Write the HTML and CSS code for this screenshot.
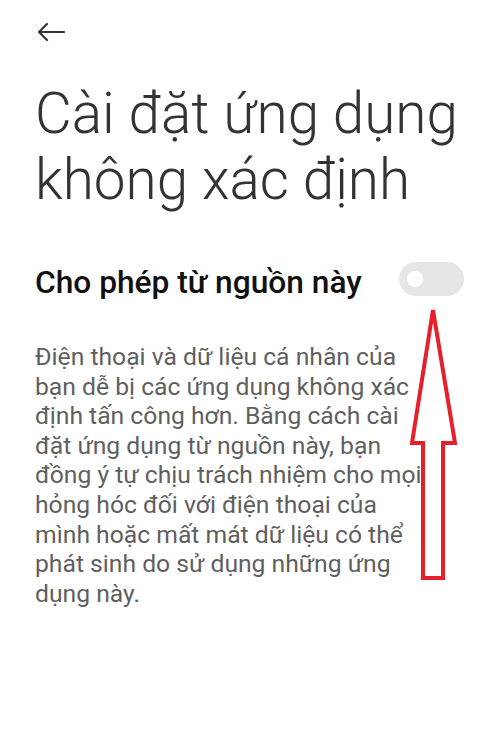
FILE: index.html
```html
<!DOCTYPE html>
<html lang="vi">
<head>
<meta charset="utf-8">
<link rel="stylesheet" href="styles.css">
</head>
<body>
<div class="page">
  <div class="topbar">
    <svg class="back" width="28" height="20" viewBox="0 0 28 20"><path d="M2 10 H27 M10 2 L2 10 L10 18" fill="none" stroke="#333" stroke-width="2.2" stroke-linecap="round" stroke-linejoin="round"/></svg>
  </div>
  <h1 class="title">Cài đặt ứng dụng không xác định</h1>
  <div class="row">
    <span class="row-label">Cho phép từ nguồn này</span>
    <span class="switch"><span class="knob"></span></span>
  </div>
  <p class="desc">Điện thoại và dữ liệu cá nhân của bạn dễ bị các ứng dụng không xác định tấn công hơn. Bằng cách cài đặt ứng dụng từ nguồn này, bạn đồng ý tự chịu trách nhiệm cho mọi hỏng hóc đối với điện thoại của mình hoặc mất mát dữ liệu có thể phát sinh do sử dụng những ứng dụng này.</p>
</div>
<svg class="annot" width="500" height="733" viewBox="0 0 500 733"><path d="M433 310 L455 443 L443 443 L443 578 L423 578 L423 443 L412 443 Z" fill="#fff" stroke="#e5202b" stroke-width="4" stroke-linejoin="miter"/></svg>
</body>
</html>
```
FILE: styles.css
```css
html, body { margin: 0; padding: 0; background: #fff; }
body { font-family: Roboto, "Noto Sans", sans-serif; width: 500px; height: 733px; overflow: hidden; position: relative; }
.page { padding: 0 35px 0 35px; }
.topbar { height: 66px; display: flex; align-items: center; }
.back { display: block; margin-left: 2px; margin-top: -2px; }
.title { margin: 15px 0 0 0; font-weight: 300; font-size: 56.6px; line-height: 66px; color: #333; }
.row { display: flex; align-items: center; justify-content: space-between; margin-top: 46px; height: 40px; }
.row-label { font-size: 31.7px; font-weight: 500; color: #111; margin-top: 6px; }
.switch { width: 65px; height: 34px; border-radius: 17px; background: #e6e6e6; position: relative; margin-right: 1px; }
.knob { position: absolute; left: 8px; top: 9px; width: 16px; height: 16px; border-radius: 50%; background: #fff; }
.desc { margin: 43px 0 0 0; font-size: 24.7px; line-height: 29.6px; color: #5f5f5f; width: 400px; }
.annot { position: absolute; left: 0; top: 0; pointer-events: none; }
```
